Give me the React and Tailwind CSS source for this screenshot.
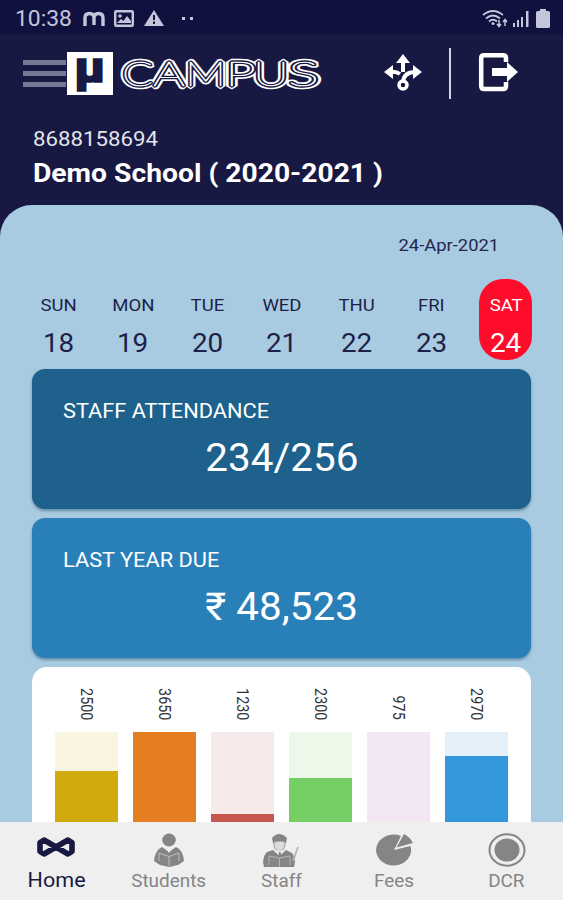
const days = [
  { name: "SUN", date: 18 },
  { name: "MON", date: 19 },
  { name: "TUE", date: 20 },
  { name: "WED", date: 21 },
  { name: "THU", date: 22 },
  { name: "FRI", date: 23 },
  { name: "SAT", date: 24 },
];

const bars = [
  { value: 2500, color: "bg-[#d0aa0f]", track: "bg-[#faf5e1]", top: 39 },
  { value: 3650, color: "bg-[#e57e22]", track: "bg-[#e57e22]", top: 0 },
  { value: 1230, color: "bg-[#c8564c]", track: "bg-[#f7eaea]", top: 82 },
  { value: 2300, color: "bg-[#76cf65]", track: "bg-[#edf8e9]", top: 46 },
  { value: 975, color: "bg-[#9b59b6]", track: "bg-[#f3e7f3]", top: 100 },
  { value: 2970, color: "bg-[#3397db]", track: "bg-[#e4f1fb]", top: 24 },
];

const StatusBar = () => {
  return (
    <div className="flex h-[34px] items-center justify-between bg-[#10113f] pl-[15px] pr-[13px] pt-[3px] text-[#c5c5dc]">
      <div className="flex items-center">
        <span className="w-[68px] text-[22px] leading-none">
          <span className="inline-block origin-left scale-x-[1.04]">10:38</span>
        </span>
        <svg width="22" height="16" viewBox="0 0 22 16" fill="none" stroke="currentColor" strokeWidth="3.4">
          <path d="M2 15V7Q2 2.5 6.500 2.500T11 7V14M11 7Q11 2.500 15.500 2.500T20 7V15" />
        </svg>
        <svg className="ml-[9px]" width="20" height="17" viewBox="0 0 20 17" fill="none" stroke="currentColor" strokeWidth="2.4">
          <rect x="1.200" y="1.200" width="17.600" height="14.600" rx="1" />
          <path d="M3 13l4-4 2.500 2L13 6l4 5v2z" fill="currentColor" stroke="none" />
          <path d="M6 4v4M4 6h4" strokeWidth="1.300" />
        </svg>
        <svg className="ml-[10px]" width="20" height="17" viewBox="0 0 20 17">
          <path d="M10 0L20 16H0z" fill="currentColor" />
          <path d="M10 5v5M10 11.500v2.500" stroke="#10113f" strokeWidth="2" />
        </svg>
        <span className="ml-[18px] h-[3px] w-[3px] bg-current"></span>
        <span className="ml-[5px] h-[3px] w-[3px] bg-current"></span>
      </div>
      <div className="flex items-center">
        <svg width="26" height="20" viewBox="0 0 26 20" fill="none" stroke="currentColor" strokeWidth="1.800">
          <path d="M1 6Q11-2 21 6M4 9.500Q11 3.500 18 9.500M7 12.500Q11 9 15 12.500" />
          <circle cx="11" cy="14.500" r="1.500" fill="currentColor" stroke="none" />
          <path d="M17 11v6M15 15l2 2.500L19 15M23 17v-6M21 13l2-2.500L25 13" strokeWidth="1.500" />
        </svg>
        <svg className="ml-[4px]" width="18" height="18" viewBox="0 0 18 18" fill="currentColor">
          <path d="M1 13h2v4H1zM5 10h2v7H5zM9 7h2v10H9zM14 1h2.500v16H14z" />
        </svg>
        <svg className="ml-[6px]" width="14" height="19" viewBox="0 0 14 19" fill="currentColor">
          <path d="M4 0h6v2h2.500Q14 2 14 3.500v14Q14 19 12.500 19h-11Q0 19 0 17.500v-14Q0 2 1.500 2H4z" />
        </svg>
      </div>
    </div>
  );
};

const Logo = () => {
  return (
    <svg className="overflow-visible" width="252" height="46" viewBox="0 0 252 46">
      <rect width="46" height="43" x="0" y="2" fill="#fff" />
      <text
        x="7.500"
        y="31.500"
        fill="#181942"
        stroke="#181942"
        strokeWidth="1.500"
        textLength="31"
        lengthAdjust="spacingAndGlyphs"
        className="font-['Roboto'] text-[42px] font-black"
      >
        µ
      </text>
      <defs>
        <text id="campus" y="35.500" strokeLinejoin="bevel" className="font-['Lato'] text-[33px] font-thin">
          <tspan x="55" textLength="31" lengthAdjust="spacingAndGlyphs">C</tspan>
          <tspan x="86" textLength="32" lengthAdjust="spacingAndGlyphs">A</tspan>
          <tspan x="118" textLength="41" lengthAdjust="spacingAndGlyphs">M</tspan>
          <tspan x="158" textLength="31" lengthAdjust="spacingAndGlyphs">P</tspan>
          <tspan x="186" textLength="36" lengthAdjust="spacingAndGlyphs">U</tspan>
          <tspan x="221" textLength="31" lengthAdjust="spacingAndGlyphs">S</tspan>
        </text>
      </defs>
      <use href="#campus" stroke="#fff" strokeWidth="6.600" />
      <use href="#campus" stroke="#181942" strokeWidth="3.300" />
      <use href="#campus" stroke="#fff" fill="#fff" strokeWidth="0.700" />
    </svg>
  );
};

const Header = () => {
  return (
    <div className="flex h-[78px] items-center pl-[23px]">
      <div className="flex w-[43px] flex-col gap-[6px]">
        <span className="h-[5px] bg-[#777895]"></span>
        <span className="h-[5px] bg-[#777895]"></span>
        <span className="h-[5px] bg-[#777895]"></span>
      </div>
      <div className="ml-[1px]">
        <Logo />
      </div>
      <svg className="ml-[65px]" width="38" height="38" viewBox="0 0 38 38" fill="none" stroke="#fff" strokeWidth="4">
        <path d="M19 18V7M16 20Q12 17 6 18M19 29Q19 18 32 18" />
        <path d="M19 0l7 9H12zM0 18l9-7v14zM38 18l-9-7v14z" fill="#fff" stroke="none" />
        <circle cx="19" cy="31" r="4" strokeWidth="3.500" />
      </svg>
      <span className="ml-[27px] h-[51px] w-[2px] bg-[#d5d5df]"></span>
      <svg className="mb-[2px] ml-[27px]" width="40" height="40" viewBox="0 0 40 40" fill="none" stroke="#fff" strokeWidth="4.500">
        <path d="M28 10V6Q28 3.200 25 3.200H6Q3.200 3.200 3.200 6V34Q3.200 37 6 37H25Q28 37 28 34V30" />
        <path d="M14 16h15v-6L40 20 29 30v-6H14z" fill="#fff" stroke="none" />
      </svg>
    </div>
  );
};

const Card = ({ title, value, className }) => {
  return (
    <div className={`h-[140px] rounded-[13px] pl-[31px] pt-[29px] text-white shadow-[0_2px_3px_rgba(40,80,110,0.5)] ${className}`}>
      <h3 className="text-[21px] leading-[26px]">
        <span className="inline-block origin-left scale-x-[1.037]">{title}</span>
      </h3>
      <p className="mt-[8px] pr-[30px] text-center text-[38.500px] leading-[52px]">
        <span className="inline-block scale-x-[1.05]">{value}</span>
      </p>
    </div>
  );
};

const Tab = ({ label, active, children }) => {
  return (
    <div className="flex w-[112.600px] flex-col items-center">
      <div className="flex h-[46px] items-center pt-[9px]">{children}</div>
      <span className={active ? "text-[20.500px] leading-[24px] text-[#181942]" : "text-[18px] leading-[26px] text-[#858585]"}>
        <span className="inline-block scale-x-[1.05]">{label}</span>
      </span>
    </div>
  );
};

const TabBar = () => {
  return (
    <div className="flex h-[78px] shrink-0 bg-[#efefef]">
      <Tab label="Home" active>
        <svg className="mb-[5px]" width="38" height="20" viewBox="0 0 38 20" fill="none" stroke="#181942" strokeWidth="5.600" strokeLinejoin="round">
          <path d="M3 5.500L7 3l24 14 4-2.500v-9L31 3 7 17l-4-2.500z" />
        </svg>
      </Tab>
      <Tab label="Students">
        <svg width="30" height="34" viewBox="0 0 30 34" fill="#858585">
          <ellipse cx="15" cy="7" rx="6.800" ry="6.500" />
          <path d="M8 14l7 5 7-5q7 3 8 14l-6 4-9 2-9-2-6-4Q1 17 8 14z" />
          <path d="M12 15h6l-3 5z" fill="#efefef" />
          <path d="M5 20l10 3.500L25 20M15 23.500V33M5 20v8M25 20v8" fill="none" stroke="#c5c5c5" strokeWidth="0.900" />
        </svg>
      </Tab>
      <Tab label="Staff">
        <svg width="36" height="34" viewBox="0 0 36 34" fill="#858585">
          <path d="M11 8h11v4q-1 6-5.500 6T11 12z" fill="#dcdcdc" stroke="#999" />
          <path d="M9 5Q16-3 24 5l-1 5q-6-4-13 0z" />
          <path d="M10 17l6.500 6 6.500-6 6 3q2 2 3 9l-1 5H1l-1-5q1-8 4-10z" />
          <path d="M13 17.500h7L16.500 23z" fill="#efefef" />
          <path d="M16 19h1.500l1 4h-3z" />
          <path d="M6 23l10.500 2L27 23v9M6 23v9M16.500 25v9" fill="none" stroke="#bbb" strokeWidth="0.900" />
          <path d="M30 28l5-14" fill="none" stroke="#b5b5b5" strokeWidth="1.800" />
        </svg>
      </Tab>
      <Tab label="Fees">
        <svg width="38" height="34" viewBox="0 0 38 34" fill="#858585">
          <path d="M19 17L26 3A17.500 15.500 0 1 0 35.500 13z" />
          <path d="M21.500 14.500L29 1q6 3 9 9z" />
        </svg>
      </Tab>
      <Tab label="DCR">
        <svg width="38" height="34" viewBox="0 0 38 34" fill="#858585">
          <ellipse cx="19" cy="17" rx="12.500" ry="11.500" />
          <ellipse cx="19" cy="17" rx="17.500" ry="15.700" fill="none" stroke="#858585" strokeWidth="2" />
        </svg>
      </Tab>
    </div>
  );
};

export default function App() {
  return (
    <div className="flex h-[900px] w-[563px] flex-col overflow-hidden bg-[#181942] font-['Roboto',sans-serif]">
      <StatusBar />
      <Header />
      <div className="h-[93px] shrink-0 pl-[33px] pt-[14px] text-white">
        <p className="text-[21px] leading-[26px] text-[#e4e4ec]">
          <span className="inline-block origin-left scale-x-[1.06]">8688158694</span>
        </p>
        <h2 className="mt-[6px] text-[25px] font-bold leading-[32px]">
          <span className="inline-block origin-left scale-x-[1.13]">Demo School ( 2020-2021 )</span>
        </h2>
      </div>

      <div className="flex min-h-0 flex-1 flex-col overflow-hidden rounded-t-[32px] bg-[#a8cbe2] px-[32px]">
        <p className="mt-[28px] pr-[32px] text-right text-[17px] leading-[24px] text-[#24264f]">
          <span className="inline-block origin-right scale-x-[1.08]">24-Apr-2021</span>
        </p>
        <div className="-ml-[11px] -mr-[13px] mt-[22px] flex shrink-0">
          {days.map((day) => (
            <div key={day.name} className="flex w-[74.600px] justify-center">
              <div
                className={
                  day.date === 24
                    ? "flex h-[81px] w-[53px] flex-col items-center rounded-[24px] bg-[#fd0d29] pt-[14px] text-white"
                    : "flex h-[81px] w-[53px] flex-col items-center pt-[14px] text-[#1d1f48]"
                }
              >
                <span className="inline-block scale-x-[1.09] text-[17px] leading-[24px]">{day.name}</span>
                <span className="mt-[10px] inline-block scale-x-[1.07] text-[26px] leading-[32px]">{day.date}</span>
              </div>
            </div>
          ))}
        </div>

        <div className="mt-[9px] flex min-h-0 flex-col gap-[9px]">
          <Card title="STAFF ATTENDANCE" value="234/256" className="bg-[#1d618c]" />
          <Card title="LAST YEAR DUE" value="₹ 48,523" className="bg-[#2980b9]" />
          <div className="h-[155px] rounded-t-[15px] bg-white px-[23px] pt-[14px]">
            <div className="flex justify-between">
              {bars.map((bar) => (
                <div key={bar.value} className="flex w-[63px] flex-col">
                  <div className="flex h-[51px] items-end justify-center pb-[12px]">
                    <span className="origin-bottom scale-y-[0.84] text-[17px] leading-[20px] text-[#333] [writing-mode:vertical-rl]">{bar.value}</span>
                  </div>
                  <div className={`flex h-[100px] flex-col justify-end ${bar.track}`}>
                    <div className={bar.color} style={{ height: 100 - bar.top }}></div>
                  </div>
                </div>
              ))}
            </div>
          </div>
        </div>
      </div>

      <TabBar />
    </div>
  );
}
